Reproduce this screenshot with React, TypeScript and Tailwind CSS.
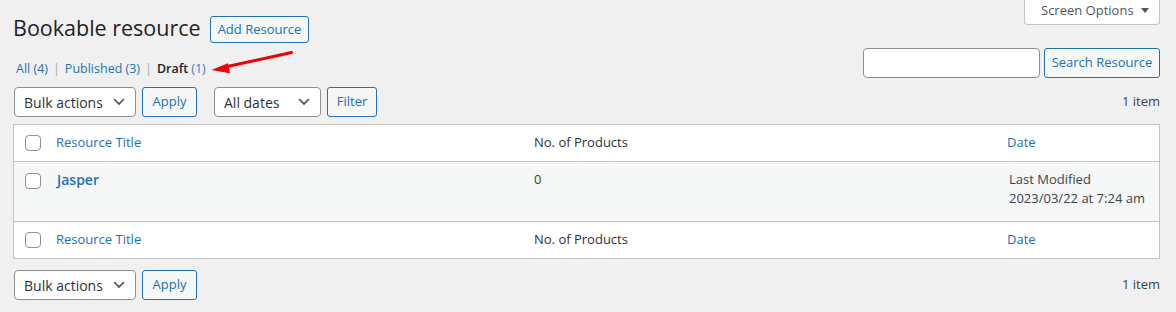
import type { ReactNode } from "react";

const font = { fontFamily: '"Open Sans", "Noto Sans", Arial, sans-serif' };

function Chevron() {
  return (
    <svg width="16" height="16" viewBox="0 0 20 20" className="shrink-0">
      <path d="M5 6l5 5 5-5 2 1-7 7-7-7z" fill="#50575e" />
    </svg>
  );
}

function Select({ label, width }: { label: string; width: string }) {
  return (
    <div
      className={`${width} flex h-[30px] items-center justify-between rounded-[4px] border border-[#8c8f94] bg-white pl-[9px] pr-[8px] text-[14px] text-[#2c3338]`}
    >
      <span>{label}</span>
      <Chevron />
    </div>
  );
}

function Button({ children, className = "" }: { children: ReactNode; className?: string }) {
  return (
    <button
      className={`flex h-[30px] items-center justify-center rounded-[3px] border border-[#2271b1] bg-[#f6f7f7] text-[13px] text-[#2271b1] ${className}`}
    >
      {children}
    </button>
  );
}

function Checkbox() {
  return <div className="h-4 w-4 rounded-[4px] border border-[#8c8f94] bg-white" />;
}

function HeadRow({ border }: { border: string }) {
  return (
    <div className={`grid h-[37px] grid-cols-[32px_478px_473px_1fr] items-center bg-white text-[13px] ${border}`}>
      <div className="pl-[11px]">
        <Checkbox />
      </div>
      <div className="pl-[10px] text-[#2271b1]">Resource Title</div>
      <div className="pl-[10px] text-[#2c3338]">No. of Products</div>
      <div className="pl-[10px] text-[#2271b1]">Date</div>
    </div>
  );
}

function Tablenav({ withFilter }: { withFilter?: boolean }) {
  return (
    <div className="flex h-[30px] items-center">
      <div className="ml-[1px] flex gap-[6px]">
        <Select label="Bulk actions" width="w-[122px]" />
        <Button className="w-[55px]">Apply</Button>
      </div>
      {withFilter && (
        <div className="ml-[17px] flex gap-[6px]">
          <Select label="All dates" width="w-[107px]" />
          <Button className="w-[50px]">Filter</Button>
        </div>
      )}
      <div className="ml-auto text-[13px] text-[#3c434a]">1 item</div>
    </div>
  );
}

export default function App() {
  return (
    <div
      className="relative h-[312px] w-[1176px] overflow-hidden bg-[#f0f0f1] pl-[13px] pr-[16px] pt-[13px]"
      style={font}
    >
      {/* screen options tab */}
      <div className="absolute right-[16px] top-0 flex h-[25px] w-[136px] items-start gap-[6px] rounded-b-[4px] border border-t-0 border-[#c3c4c7] bg-white pl-[16px] pt-[1px] text-[13px] leading-[18px] text-[#50575e]">
        <span>Screen Options</span>
        <svg width="10" height="18" viewBox="0 0 10 18">
          <path d="M1 7h8l-4 5z" fill="#50575e" />
        </svg>
      </div>

      {/* title */}
      <div className="flex h-[30px] items-start">
        <h1 className="text-[21.5px] leading-[30px] font-normal text-[#1d2327]">Bookable resource</h1>
        <button className="ml-[9px] mt-[3px] flex h-[27px] items-center rounded-[3px] border border-[#2271b1] bg-[#f6f7f7] px-[7px] text-[13px] font-medium text-[#2271b1]">
          Add Resource
        </button>
      </div>

      {/* views + search */}
      <div className="relative mt-[5px] flex h-[30px] items-end justify-between">
        <div className="ml-[3px] flex h-[18px] items-center text-[12.5px] leading-[18px]">
          <span className="text-[#2271b1]">All (4)</span>
          <span className="mx-[5px] text-[#a7aaad]">|</span>
          <span className="text-[#2271b1]">Published (3)</span>
          <span className="mx-[5px] text-[#a7aaad]">|</span>
          <span className="font-semibold text-[#1d2327]">Draft</span>
          <span className="ml-[3px] text-[#3582c4]">(1)</span>
        </div>
        <svg
          className="absolute left-[192px] top-0"
          width="95"
          height="30"
          viewBox="0 0 95 30"
        >
          <line x1="86.5" y1="4.5" x2="20" y2="19" stroke="#f00000" strokeWidth="3" strokeLinecap="round" />
          <path d="M6.5 22L23 15.2L25 25.3Z" fill="#f00000" />
        </svg>
        <div className="flex h-[30px] items-stretch gap-[4px]">
          <div className="w-[177px] rounded-[4px] border border-[#8c8f94] bg-white" />
          <Button className="w-[116px]">Search Resource</Button>
        </div>
      </div>

      {/* top tablenav */}
      <div className="mt-[9px]">
        <Tablenav withFilter />
      </div>

      {/* table */}
      <div className="mt-[7px] w-[1147px] border border-[#c3c4c7]">
        <HeadRow border="border-b border-[#c3c4c7]" />
        <div className="grid h-[59px] grid-cols-[32px_478px_473px_1fr] items-start bg-[#f6f7f7] pt-[11px] text-[13px]">
          <div className="pl-[11px]">
            <Checkbox />
          </div>
          <div className="-mt-[3px] pl-[11px] text-[14px] leading-[19px] font-semibold text-[#2271b1]">Jasper</div>
          <div className="-mt-[3px] pl-[10px] leading-[19px] text-[#3c434a]">0</div>
          <div className="-mt-[3px] pl-[12px] leading-[19px] text-[#3c434a]">
            <div>Last Modified</div>
            <div>2023/03/22 at 7:24 am</div>
          </div>
        </div>
        <HeadRow border="border-t border-[#c3c4c7]" />
      </div>

      {/* bottom tablenav */}
      <div className="mt-[11px]">
        <Tablenav />
      </div>
    </div>
  );
}
